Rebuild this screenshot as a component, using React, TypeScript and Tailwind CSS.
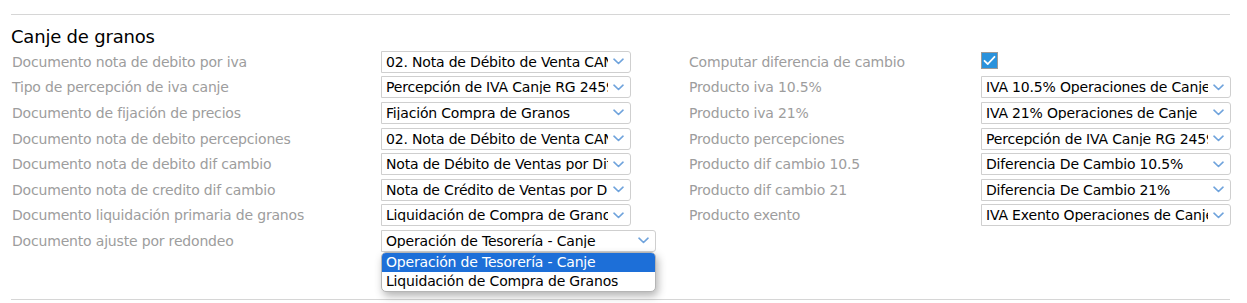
const left = [
  { label: "Documento nota de debito por iva", value: "02. Nota de Débito de Venta CANJE" },
  { label: "Tipo de percepción de iva canje", value: "Percepción de IVA Canje RG 2459" },
  { label: "Documento de fijación de precios", value: "Fijación Compra de Granos" },
  { label: "Documento nota de debito percepciones", value: "02. Nota de Débito de Venta CANJE" },
  { label: "Documento nota de debito dif cambio", value: "Nota de Débito de Ventas por Diferencia" },
  { label: "Documento nota de credito dif cambio", value: "Nota de Crédito de Ventas por Diferencia" },
  { label: "Documento liquidación primaria de granos", value: "Liquidación de Compra de Granos" },
];

const right = [
  { label: "Producto iva 10.5%", value: "IVA 10.5% Operaciones de Canje" },
  { label: "Producto iva 21%", value: "IVA 21% Operaciones de Canje" },
  { label: "Producto percepciones", value: "Percepción de IVA Canje RG 2459" },
  { label: "Producto dif cambio 10.5", value: "Diferencia De Cambio 10.5%" },
  { label: "Producto dif cambio 21", value: "Diferencia De Cambio 21%" },
  { label: "Producto exento", value: "IVA Exento Operaciones de Canje" },
];

function Chevron() {
  return (
    <svg width="11" height="7" viewBox="0 0 11 7" fill="none" stroke="#6fa3dc" strokeWidth="1.6" strokeLinecap="round" strokeLinejoin="round">
      <path d="M1 1.2 5.5 5.5 10 1.2" />
    </svg>
  );
}

function Select({ value, wide }: { value: string; wide?: boolean }) {
  return (
    <div className={`flex h-[22px] items-center rounded-r-[3px] border border-[#cfcfcf] bg-white ${wide ? "w-[275px]" : "w-[250px]"}`}>
      <span className="min-w-0 flex-1 overflow-hidden whitespace-nowrap pl-[4px] text-black">{value}</span>
      <span className="flex w-[22px] shrink-0 justify-center pr-[2px]">
        <Chevron />
      </span>
    </div>
  );
}

function Row({ label, children, labelW }: { label: string; children: React.ReactNode; labelW: string }) {
  return (
    <div className="flex h-[25.6px] items-center">
      <div className={`${labelW} shrink-0 whitespace-nowrap text-[#9d9d9d]`}>{label}</div>
      {children}
    </div>
  );
}

export default function App() {
  return (
    <div className="h-[303px] w-[1247px] bg-white pt-[14px] pl-[11px] text-[14px] leading-none font-['DejaVu_Sans',Verdana,sans-serif] tracking-[-0.18px]">
      <div className="w-[1219px] border-t border-[#d6d6d6]" />
      <h2 className="mt-[12px] text-[18px] leading-[20px] tracking-[-0.2px] text-black">Canje de granos</h2>
      <div className="mt-[2px] flex pl-[1px]">
        <div className="w-[677px]">
          {left.map((r) => (
            <Row key={r.label} label={r.label} labelW="w-[369px]">
              <Select value={r.value} />
            </Row>
          ))}
          <Row label="Documento ajuste por redondeo" labelW="w-[369px]">
            <div className="relative">
              <Select value="Operación de Tesorería - Canje" wide />
              <div className="absolute top-[22px] left-0 z-10 w-[275px] overflow-hidden rounded-[5px] border border-[#b5b5b5] bg-white shadow-[2px_4px_8px_rgba(0,0,0,0.3)]">
                <div className="flex h-[19px] items-center bg-[#1d6fd8] pl-[4px] text-white">Operación de Tesorería - Canje</div>
                <div className="flex h-[19px] items-center pl-[4px] text-black">Liquidación de Compra de Granos</div>
              </div>
            </div>
          </Row>
        </div>
        <div>
          <Row label="Computar diferencia de cambio" labelW="w-[292px]">
            <div className="mb-[3px] flex h-[17px] w-[17px] items-center justify-center border border-[#9a9a9a] bg-[#2a92dc]">
              <svg width="13" height="11" viewBox="0 0 13 11" fill="none" stroke="white" strokeWidth="1.8" strokeLinecap="round" strokeLinejoin="round">
                <path d="M1.5 5.8 4.8 9 11.5 1.8" />
              </svg>
            </div>
          </Row>
          {right.map((r) => (
            <Row key={r.label} label={r.label} labelW="w-[292px]">
              <Select value={r.value} />
            </Row>
          ))}
        </div>
      </div>
      <div className="mt-[45px] w-[1219px] border-t border-[#d6d6d6]" />
    </div>
  );
}
